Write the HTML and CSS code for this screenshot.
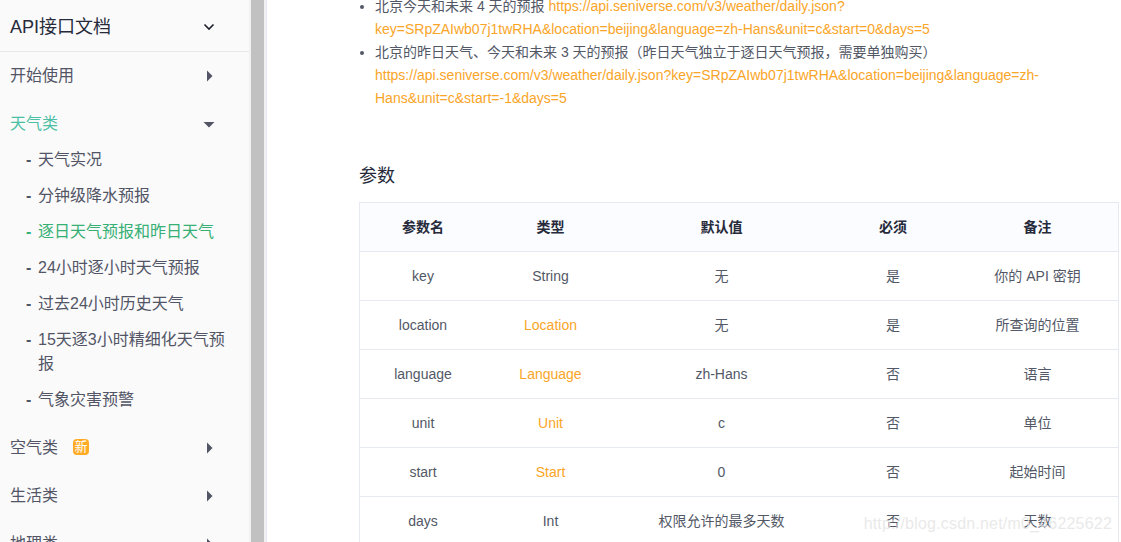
FILE: index.html
```
<!DOCTYPE html>
<html lang="zh-CN">

<head>
    <meta charset="UTF-8">
    <meta name="viewport" content="width=device-width, initial-scale=1.0">
    <title>API接口文档</title>
    <link rel="stylesheet" href="styles.css">
</head>

<body>
    <div class="page">
        <aside class="sidebar">
            <div class="sidebar-header">
                <span>API接口文档</span>
                <svg class="icon" width="12" height="12" viewBox="0 0 12 12"><path d="M1.5 3.5 L6 8 L10.5 3.5" fill="none" stroke="#1c1f2b" stroke-width="1.6"/></svg>
            </div>
            <div class="group">
                <div class="group-title">
                    <span>开始使用</span>
                    <svg class="icon" width="12" height="12" viewBox="0 0 12 12"><path d="M4 0.5 L9.5 6 L4 11.5 Z"/></svg>
                </div>
            </div>
            <div class="group">
                <div class="group-title open">
                    <span>天气类</span>
                    <svg class="icon" width="12" height="12" viewBox="0 0 12 12"><path d="M0.5 4 L11.5 4 L6 9.5 Z"/></svg>
                </div>
                <ul class="menu">
                    <li><b>-</b><span>天气实况</span></li>
                    <li><b>-</b><span>分钟级降水预报</span></li>
                    <li class="active"><b>-</b><span>逐日天气预报和昨日天气</span></li>
                    <li><b>-</b><span>24小时逐小时天气预报</span></li>
                    <li><b>-</b><span>过去24小时历史天气</span></li>
                    <li><b>-</b><span>15天逐3小时精细化天气预报</span></li>
                    <li><b>-</b><span>气象灾害预警</span></li>
                </ul>
            </div>
            <div class="group">
                <div class="group-title">
                    <span>空气类</span>
                    <span class="badge">新</span>
                    <svg class="icon" width="12" height="12" viewBox="0 0 12 12"><path d="M4 0.5 L9.5 6 L4 11.5 Z"/></svg>
                </div>
            </div>
            <div class="group">
                <div class="group-title">
                    <span>生活类</span>
                    <svg class="icon" width="12" height="12" viewBox="0 0 12 12"><path d="M4 0.5 L9.5 6 L4 11.5 Z"/></svg>
                </div>
            </div>
            <div class="group">
                <div class="group-title">
                    <span>地理类</span>
                    <svg class="icon" width="12" height="12" viewBox="0 0 12 12"><path d="M4 0.5 L9.5 6 L4 11.5 Z"/></svg>
                </div>
            </div>
        </aside>
        <div class="scrollbar"><div class="thumb"></div></div>

        <main class="content">
            <ul class="examples">
                <li>北京今天和未来 4 天的预报 <a>https://api.seniverse.com/v3/weather/daily.json?<br>key=SRpZAIwb07j1twRHA&amp;location=beijing&amp;language=zh-Hans&amp;unit=c&amp;start=0&amp;days=5</a></li>
                <li>北京的昨日天气、今天和未来 3 天的预报（昨日天气独立于逐日天气预报，需要单独购买）<br><a>https://api.seniverse.com/v3/weather/daily.json?key=SRpZAIwb07j1twRHA&amp;location=beijing&amp;language=zh-<br>Hans&amp;unit=c&amp;start=-1&amp;days=5</a></li>
            </ul>
            <h3>参数</h3>
            <table>
                <colgroup>
                    <col class="col-name">
                    <col class="col-type">
                    <col class="col-default">
                    <col class="col-required">
                    <col class="col-note">
                </colgroup>
                <tr><th>参数名</th><th>类型</th><th>默认值</th><th>必须</th><th>备注</th></tr>
                <tr><td>key</td><td>String</td><td>无</td><td>是</td><td>你的 API 密钥</td></tr>
                <tr><td>location</td><td><a>Location</a></td><td>无</td><td>是</td><td>所查询的位置</td></tr>
                <tr><td>language</td><td><a>Language</a></td><td>zh-Hans</td><td>否</td><td>语言</td></tr>
                <tr><td>unit</td><td><a>Unit</a></td><td>c</td><td>否</td><td>单位</td></tr>
                <tr><td>start</td><td><a>Start</a></td><td>0</td><td>否</td><td>起始时间</td></tr>
                <tr><td>days</td><td>Int</td><td>权限允许的最多天数</td><td>否</td><td>天数</td></tr>
            </table>
        </main>
        <div class="watermark">http://blog.csdn.net/m0_46225622</div>
    </div>
</body>

</html>
```
FILE: styles.css
```
body {
    margin: 0;
    background-color: #fff;
    color: #525866;
    font-family: "Liberation Sans", "Noto Sans CJK SC", sans-serif;
    font-size: 14px;
}

ul {
    list-style: none;
    margin: 0;
    padding: 0;
}

a {
    color: #faa527;
}

.page {
    display: flex;
    position: relative;
    height: 542px;
    overflow: hidden;
}

/* sidebar */
.sidebar {
    flex: none;
    width: 249px;
    background-color: #fafafa;
    font-size: 16px;
    line-height: 24px;
    color: #525566;
}

.sidebar-header {
    display: flex;
    align-items: center;
    justify-content: space-between;
    height: 52px;
    padding: 3px 34px 0 10px;
    box-sizing: border-box;
    border-bottom: 1px solid #e8e8e8;
    font-size: 18px;
    color: #262a3a;
}

.group {
    padding: 6px 0;
}

.group-title {
    display: flex;
    align-items: center;
    height: 36px;
    padding: 0 34px 0 10px;
}

.group-title.open {
    color: #4cc0a5;
}

.icon {
    flex: none;
    margin-left: auto;
    fill: #525566;
}

.badge {
    width: 16px;
    height: 16px;
    margin: 0 0 2px 15px;
    border-radius: 4px;
    background-color: #ffab24;
    color: #fff;
    font-size: 13px;
    line-height: 16px;
    text-align: center;
}

.menu li {
    display: flex;
    padding: 6px 20px 6px 26px;
}

.menu b {
    flex: none;
    width: 12px;
}

.menu .active {
    color: #37b076;
}

.scrollbar {
    flex: none;
    width: 18px;
    padding: 0 2px;
    box-sizing: border-box;
    background-color: #f1f1f1;
    border-right: 1px solid #e6e8f1;
}

.thumb {
    height: 100%;
    background-color: #c1c1c1;
}

/* content */
.content {
    flex: none;
    width: 760px;
    padding-left: 92px;
}

.examples {
    margin-top: -5px;
    line-height: 23px;
    list-style: disc;
    padding-left: 16px;
    white-space: nowrap;
}

h3 {
    margin: 54px 0 14px;
    font-size: 18px;
    font-weight: normal;
    line-height: 24px;
    color: #262a3a;
}

table {
    width: 760px;
    table-layout: fixed;
    border: 1px solid #e6e9f2;
    border-spacing: 0;
    text-align: center;
}

th,
td {
    height: 48px;
    padding: 0 1px 0 0;
    border-bottom: 1px solid #e6e9f2;
    line-height: 22px;
}

th {
    background-color: #fafcff;
    color: #262a3a;
}

.col-name {
    width: 127px;
}

.col-type {
    width: 128px;
}

.col-default {
    width: 214px;
}

.col-required {
    width: 129px;
}

.col-note {
    width: 160px;
}

.watermark {
    position: absolute;
    right: 9px;
    bottom: 8px;
    font-size: 16px;
    line-height: 20px;
    letter-spacing: 0.2px;
    color: rgba(228, 228, 228, 0.8);
}
```
